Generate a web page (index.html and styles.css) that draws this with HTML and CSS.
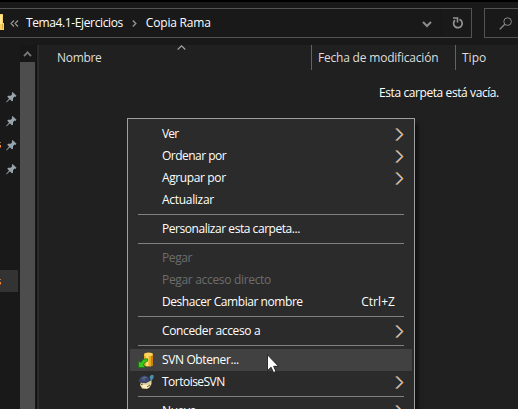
FILE: index.html
```html
<!DOCTYPE html>
<html lang="es">
<head>
<meta charset="utf-8">
<title>Copia Rama</title>
<link rel="stylesheet" href="styles.css">
</head>
<body>
<svg class="defs" width="0" height="0">
  <symbol id="pin" viewBox="0 0 11 11"><path d="M6.5 0 10.5 3.8 9.4 4.9 8.5 4.6 7 6.3V8.7L5.8 9.2 3.9 7.3.6 10.4.2 10 3 6.4 1.3 4.7 2 3.7 4.7 3.7 6.2 2.2 5.8 1Z" fill="#99a5ad"/></symbol>
  <symbol id="arrow" viewBox="0 0 9 13"><path d="M1.9.5 7.9 6.5 1.9 12.5" fill="none" stroke="#f09a42" stroke-width="1.1"/><path d="M.3.5 6.5 6.5.3 12.5" fill="none" stroke="#3f92e8" stroke-width=".9"/><path d="M1.1.5 7.2 6.5 1.1 12.5" fill="none" stroke="#f1f1e8" stroke-width=".7"/></symbol>
</svg>
<header class="toolbar">
  <div class="address">
    <svg class="folder" width="4" height="17" viewBox="0 0 4 17"><path d="M0 0H3V9H4V16H0Z" fill="#f7d263"/><path d="M0 1H2V10H0Z" fill="#ffe694"/><path d="M2.5 10V15" stroke="#d9a83a"/></svg>
    <svg class="back" width="9" height="7" viewBox="0 0 9 7"><path d="M4 .5 1 3.5 4 6.5M8 .5 5 3.5 8 6.5" fill="none" stroke="#9b9b9b" stroke-width="1.1"/></svg>
    <span class="crumb"><span class="t-tema">Tema4.1-Ejercicios</span></span>
    <svg class="next" width="5" height="7" viewBox="0 0 5 7"><path d="M.8.5 3.8 3.5.8 6.5" fill="none" stroke="#8e8e8e" stroke-width="1.5"/></svg>
    <span class="crumb"><span class="t-copia">Copia Rama</span></span>
    <svg class="down" width="10" height="7" viewBox="0 0 10 7"><path d="M1 1 5 5 9 1" fill="none" stroke="#8d8d8d" stroke-width="2"/></svg>
    <div class="refresh"><svg width="12" height="12" viewBox="0 0 12 12"><path d="M7.5 2.4A4.3 4.3 0 1 1 3 3.2" fill="none" stroke="#939393" stroke-width="1.7"/><path d="M1 1H5.5V5.5" fill="none" stroke="#939393" stroke-width="1.6"/></svg></div>
  </div>
  <div class="search"><svg width="14" height="13" viewBox="0 0 14 13"><circle cx="8.6" cy="4.6" r="3.8" fill="none" stroke="#8a8a8a"/><path d="M5.8 7.3.8 12.2" stroke="#8a8a8a" stroke-width="1.2"/></svg></div>
</header>
<div class="body">
  <nav class="sidebar">
    <div class="pinned"><svg width="11" height="11"><use href="#pin"/></svg></div>
    <div class="pinned"><svg width="11" height="11"><use href="#pin"/></svg></div>
    <div class="pinned marked"><svg width="11" height="11"><use href="#pin"/></svg></div>
    <div class="pinned"><svg width="11" height="11"><use href="#pin"/></svg></div>
    <div class="selected marked"></div>
  </nav>
  <div class="scroll">
    <svg width="15" height="17" viewBox="0 0 15 17"><path d="M4 11.2 7.5 7.4 11 11.2" fill="none" stroke="#777" stroke-width="1.9"/></svg>
    <div class="thumb"></div>
  </div>
  <div class="divider"></div>
  <main>
    <div class="columns">
      <div class="col name"><span class="t-nombre">Nombre</span><svg class="sort" width="9" height="5" viewBox="0 0 9 5"><path d="M.7 4.5 4.5.8 8.3 4.5" fill="none" stroke="#a5a5a5" stroke-width="1.1"/></svg></div>
      <div class="col date"><span class="t-fecha">Fecha de modificación</span></div>
      <div class="col type"><span class="t-tipo">Tipo</span></div>
    </div>
    <div class="empty"><span class="t-vacia">Esta carpeta está vacía.</span></div>
  </main>
</div>
<div class="menu">
  <div class="item"><span class="t-ver">Ver</span><svg class="arrow"><use href="#arrow"/></svg></div>
  <div class="item"><span class="t-ordenar">Ordenar por</span><svg class="arrow"><use href="#arrow"/></svg></div>
  <div class="item"><span class="t-agrupar">Agrupar por</span><svg class="arrow"><use href="#arrow"/></svg></div>
  <div class="item"><span class="t-actualizar">Actualizar</span></div>
  <div class="sep"></div>
  <div class="item"><span class="t-personalizar">Personalizar esta carpeta...</span></div>
  <div class="sep"></div>
  <div class="item disabled"><span class="t-pegar">Pegar</span></div>
  <div class="item disabled"><span class="t-directo">Pegar acceso directo</span></div>
  <div class="item"><span class="t-deshacer">Deshacer Cambiar nombre</span><span class="key">Ctrl+Z</span></div>
  <div class="sep"></div>
  <div class="item"><span class="t-conceder">Conceder acceso a</span><svg class="arrow"><use href="#arrow"/></svg></div>
  <div class="sep"></div>
  <div class="item hover">
    <svg class="icon" width="16" height="16" viewBox="0 0 16 16"><path d="M6 2.5Q6 .5 10.5.5T15 2.5V12.5Q15 14.5 10.5 14.5T6 12.5Z" fill="#efad20"/><path d="M8 3H10.5V14H8Z" fill="#ffe06c"/><path d="M13 3H15V12.5L13 14Z" fill="#c77e12"/><ellipse cx="10.5" cy="2.4" rx="4.2" ry="1.6" fill="#ffd762"/><path d="M9.5 6.8Q3.8 6.5 3.4 10.2L.5 9.5V15.5H7L5.6 12.9Q6 9.8 9.5 9.2Z" fill="#3cc423" stroke="#14700d" stroke-width=".7"/></svg>
    <span class="t-svn">SVN Obtener...</span>
  </div>
  <div class="item">
    <svg class="icon" width="16" height="16" viewBox="0 0 16 16"><path d="M3 8 12 7 13.5 6 13.5 10 11.5 13.5 9 15 4 14.5 2 11Z" fill="#e3d3a0"/><path d="M4 11H10L11 14H5Z" fill="#fff0bd"/><path d="M.5 7.5Q2 1.8 6.5 1.5 10.8 1.8 12 7L8 9.3 3 8.8Z" fill="#3b456b"/><path d="M3.5 5 6 3 9 4M6 3V7" fill="none" stroke="#667299"/><path d="M11.5 3 13 1H15.5V4L13 7Z" fill="#4d91ae"/><path d="M3 10.5 5 10M9 13 12 11" stroke="#69582f"/></svg>
    <span class="t-tortoise">TortoiseSVN</span><svg class="arrow"><use href="#arrow"/></svg>
  </div>
  <div class="sep"></div>
  <div class="item"><span class="t-nuevo">Nuevo</span><svg class="arrow"><use href="#arrow"/></svg></div>
</div>
<svg class="cursor" width="12" height="19" viewBox="0 0 12 19"><path d="M.5.8V16.6L4.1 13.2 6.5 18.5 8.9 17.4 6.6 12.3H11.4Z" fill="#fff" stroke="#111" stroke-width=".8"/></svg>
</body>
</html>
```
FILE: styles.css
```css
* { box-sizing: border-box; }
html, body { margin: 0; height: 409px; overflow: hidden; }
body {
  display: flex; flex-direction: column;
  background: #191919; color: #fff;
  font: 12px/16px "Open Sans", "Noto Sans", sans-serif;
  white-space: nowrap;
}
svg { display: block; flex: none; }
.defs { position: absolute; }
.toolbar { height: 45px; flex: none; display: flex; gap: 12px; padding-top: 6px; border-top: 2px solid #000; }
.address { width: 472px; height: 30px; flex: none; display: flex; align-items: center; border: 1px solid #535353; border-left: 0; }
.folder { margin-bottom: 2px; }
.back { margin-left: 6px; }
.crumb { margin-left: 7px; }
.address .next { margin-left: 9px; }
.next + .crumb { margin-left: 9px; }
.down { margin-left: auto; margin-top: 2px; }
.refresh { width: 30px; height: 28px; margin-left: 9px; padding-left: 10px; border-left: 1px solid #151515; display: flex; align-items: center; }
.search { width: 40px; height: 30px; flex: none; padding: 8px 0 0 14px; border: 1px solid #535353; }
.body { flex: 1; display: flex; }
.sidebar { width: 20px; padding-top: 40px; }
.pinned { height: 24px; padding: 7px 0 0 6px; }
.marked { background-image: linear-gradient(#b07a34 0 1px, transparent 1px 3px, #ed8b32 3px 5px, #a64834 5px 6px); background-size: 1px 6px; background-repeat: no-repeat; background-position: 0 9px; }
.selected { width: 18px; height: 22px; margin-top: 89px; background-color: #333; }
.scroll { width: 15px; display: flex; flex-direction: column; background: #171717; }
.thumb { flex: 1; background: #4d4d4d; }
.divider { width: 4px; background: linear-gradient(90deg, #191919 0 1px, #111 1px 2px, #2b2b2b 2px 4px); }
main { flex: 1; background: #202020; }
.columns { height: 25px; display: flex; color: #dedede; }
.col { padding-top: 5px; }
.name { width: 272px; padding-left: 18px; position: relative; }
.sort { position: absolute; left: 138px; top: 0; }
.date { width: 144px; padding-left: 6px; border-left: 1px solid #636363; }
.type { flex: 1; padding-left: 6px; border-left: 1px solid #636363; }
.empty { padding: 15px 0 0 340px; }
.menu {
  position: absolute; left: 127px; top: 118px; width: 288px; height: 310px;
  padding: 4px 2px; background: #2b2b2b; border: 1px solid #a0a0a0;
  box-shadow: 4px 4px 4px -1px rgba(0, 0, 0, .5);
}
.item { height: 22px; padding: 0 8px 0 32px; display: flex; align-items: center; }
.item .arrow { width: 9px; height: 13px; margin-left: auto; }
.icon { margin: 0 8px 0 -24px; }
.hover { background: #414141; }
.disabled { color: #6d6d6d; }
.key { margin-left: auto; margin-right: 9px; letter-spacing: .05px; }
.sep { height: 7px; margin: 0 8px; padding-top: 3px; }
.sep::before { content: ""; display: block; height: 1px; background: #808080; }
.cursor { position: absolute; left: 267px; top: 354px; }

/* Tighter tracking per label */
.t-tema { letter-spacing: -.38px; }
.t-copia { letter-spacing: -.2px; }
.t-nombre { letter-spacing: -.3px; }
.t-fecha { letter-spacing: -.2px; }
.t-vacia { letter-spacing: -.41px; }
.t-ver { letter-spacing: -.8px; }
.t-ordenar { letter-spacing: -.52px; }
.t-agrupar { letter-spacing: -.38px; }
.t-actualizar { letter-spacing: -.3px; }
.t-personalizar { letter-spacing: -.45px; }
.t-pegar { letter-spacing: -.4px; }
.t-directo { letter-spacing: -.32px; }
.t-deshacer { letter-spacing: -.44px; }
.t-conceder { letter-spacing: -.36px; }
.t-svn { letter-spacing: -.37px; }
.t-tortoise { letter-spacing: -.52px; }
.t-nuevo { letter-spacing: -.4px; }
```
